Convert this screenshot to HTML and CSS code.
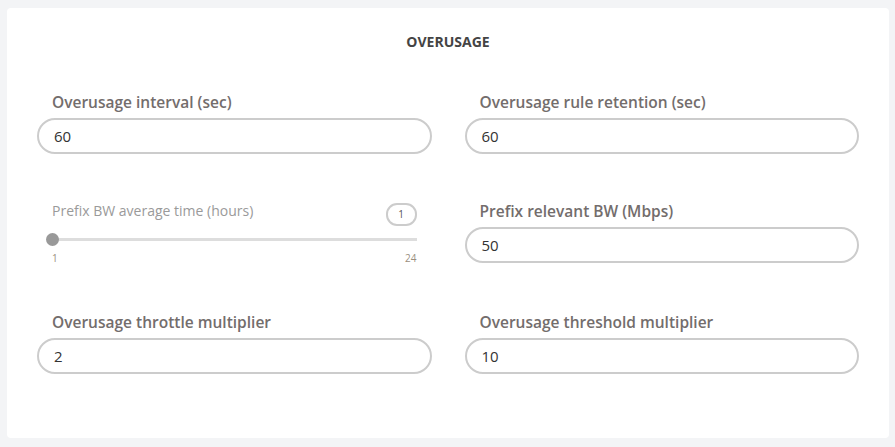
FILE: index.html
```html
<!DOCTYPE html>
<html>
<head>
<meta charset="utf-8">
<link rel="stylesheet" href="styles.css">
</head>
<body>
<div class="card">
  <div class="title">OVERUSAGE</div>
  <div class="grid">
    <div class="field">
      <div class="label">Overusage interval (sec)</div>
      <div class="input">60</div>
    </div>
    <div class="field">
      <div class="label">Overusage rule retention (sec)</div>
      <div class="input">60</div>
    </div>
    <div class="field slider-field">
      <div class="slider-head">
        <span class="slider-label">Prefix BW average time (hours)</span>
        <span class="slider-value">1</span>
      </div>
      <div class="track"><span class="thumb"></span></div>
      <div class="ticks"><span>1</span><span>24</span></div>
    </div>
    <div class="field">
      <div class="label">Prefix relevant BW (Mbps)</div>
      <div class="input">50</div>
    </div>
    <div class="field">
      <div class="label">Overusage throttle multiplier</div>
      <div class="input">2</div>
    </div>
    <div class="field">
      <div class="label">Overusage threshold multiplier</div>
      <div class="input">10</div>
    </div>
  </div>
</div>
</body>
</html>
```
FILE: styles.css
```css
html, body {
  margin: 0;
  padding: 0;
}
body {
  background: #f3f4f6;
  padding: 8px 6px 9px 7px;
  font-family: "Open Sans", "Liberation Sans", sans-serif;
}
.card {
  box-sizing: border-box;
  width: 882px;
  height: 430px;
  background: #fff;
  border-radius: 4px;
  padding: 26px 30px 0 30px;
}
.title {
  text-align: center;
  font-size: 14px;
  font-weight: 700;
  line-height: 16px;
  color: #444;
  margin-bottom: 43px;
}
.grid {
  display: grid;
  grid-template-columns: 1fr 1fr;
  column-gap: 33px;
  row-gap: 48px;
}
.field {
  display: flex;
  flex-direction: column;
}
.label {
  padding-left: 15px;
  font-size: 15.5px;
  font-weight: 600;
  line-height: 18px;
  color: #736d6c;
  margin-bottom: 7px;
}
.input {
  box-sizing: border-box;
  height: 36px;
  border: 2px solid #cccccc;
  border-radius: 18px;
  padding: 0 15px;
  font-size: 15px;
  line-height: 32px;
  color: #333;
}
.slider-field {
  padding: 0 15px;
}
.slider-head {
  display: flex;
  justify-content: space-between;
  align-items: flex-start;
  height: 24px;
}
.slider-label {
  font-size: 14px;
  line-height: 18px;
  color: #9a9a9a;
}
.slider-value {
  box-sizing: border-box;
  margin-top: 1px;
  width: 31px;
  height: 23px;
  border: 2px solid #cccccc;
  border-radius: 11px;
  font-size: 10px;
  line-height: 19px;
  text-align: center;
  color: #555;
}
.track {
  position: relative;
  margin-top: 12px;
  height: 3px;
  background: #dddddd;
}
.thumb {
  position: absolute;
  left: -6px;
  top: -5px;
  width: 13px;
  height: 13px;
  border-radius: 50%;
  background: #999;
}
.ticks {
  display: flex;
  justify-content: space-between;
  margin-top: 10px;
  font-size: 10px;
  line-height: 14px;
  color: #9a8f80;
}
```
